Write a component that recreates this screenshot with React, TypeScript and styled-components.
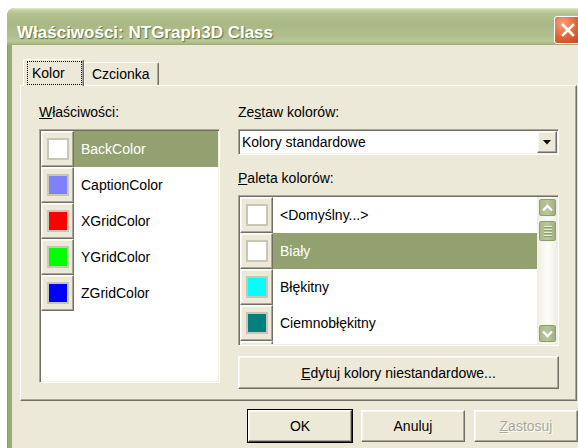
import React from "react";
import styled, { createGlobalStyle, css } from "styled-components";

const GlobalStyle = createGlobalStyle`
  html, body {
    margin: 0;
    padding: 0;
    background: #fff;
    overflow: hidden;
  }
  body {
    font-family: "Liberation Sans", Arial, sans-serif;
    font-size: 14px;
    color: #000;
  }
  * {
    box-sizing: border-box;
  }
`;

const raised = css`
  border: 1px solid;
  border-color: #fff #716f64 #716f64 #fff;
  box-shadow: inset -1px -1px 0 #aca899, inset 1px 1px 0 #f7f6ef;
`;

const sunken = css`
  border: 1px solid;
  border-color: #aca899 #fff #fff #aca899;
  box-shadow: inset 1px 1px 0 #716f64, inset -1px -1px 0 #f1efe2;
  padding: 1px;
  background: #fff;
`;

// the dialog runs past the right edge of the screen, so clip it there
const Screen = styled.div`
  width: 100vw;
  height: 100vh;
  overflow: hidden;
  padding: 8px 0 0 7px;
`;

const Window = styled.div`
  width: 588px;
  min-width: 588px;
  height: 460px;
  padding: 0 4px;
  display: flex;
  flex-direction: column;
  border-radius: 8px 8px 0 0;
  border-left: 1px solid #8a9d64;
  background: linear-gradient(to right, #98ab71, #aabb8a);
`;

const TitleBar = styled.div`
  height: 37px;
  margin: 0 -4px 0 -5px;
  padding: 0 13px 0 10px;
  display: flex;
  align-items: center;
  justify-content: space-between;
  border-radius: 8px 8px 0 0;
  background: linear-gradient(
    #e3e9cc 0,
    #c6d2a3 2px,
    #b2c18f 6px,
    #a9b985 45%,
    #afbe8b 75%,
    #bac799 90%,
    #9aac75 100%
  );
`;

const Title = styled.div`
  margin-top: 12px;
  font-size: 17px;
  line-height: 20px;
  font-weight: bold;
  color: #fff;
  text-shadow: 1px 1px 1px #5f7040;
  white-space: nowrap;
`;

const CloseButton = styled.div`
  width: 28px;
  height: 28px;
  flex-shrink: 0;
  margin-top: 6px;
  display: flex;
  align-items: center;
  justify-content: center;
  border: 1px solid #fff;
  border-radius: 3px;
  background: radial-gradient(circle at 30% 25%, #f3a27c, #de6032 55%, #c4471d);
`;

const Body = styled.div`
  flex: 1;
  padding-top: 14px;
  background: #ece9d8;
`;

const Tabs = styled.div`
  display: flex;
  align-items: flex-end;
  height: 26px;
  padding-left: 11px;
`;

const Tab = styled.div<{ $active?: boolean }>`
  height: ${(p) => (p.$active ? 27 : 23)}px;
  display: flex;
  align-items: center;
  padding: ${(p) => (p.$active ? "0 1px 1px 3px" : "0 8px 0 7px")};
  border: 1px solid;
  border-bottom: none;
  border-color: #fff #716f64 transparent #fff;
  border-radius: 2px 2px 0 0;
  box-shadow: inset -1px 0 0 #aca899;
  background: #ece9d8;
  ${(p) =>
    p.$active &&
    css`
      position: relative;
      z-index: 1;
      margin-bottom: -1px;
    `}
`;

const FocusRect = styled.div`
  width: 55px;
  height: 24px;
  padding-left: 4px;
  display: flex;
  align-items: center;
  border: 1px dotted #000;
`;

const Panel = styled.div`
  width: 557px;
  height: 316px;
  margin-left: 8px;
  padding: 18px 0 0 18px;
  display: flex;
  gap: 18px;
  border: 1px solid;
  border-color: #fff #716f64 #716f64 #fff;
  box-shadow: inset -1px -1px 0 #aca899;
`;

const Column = styled.div<{ $width: number }>`
  width: ${(p) => p.$width}px;
  flex-shrink: 0;
  display: flex;
  flex-direction: column;
`;

const Label = styled.div<{ $gap?: number }>`
  line-height: 16px;
  margin-top: ${(p) => p.$gap ?? 0}px;
  margin-bottom: 9px;
`;

const Key = styled.span`
  text-decoration: underline;
`;

const ListBox = styled.div<{ $height: number }>`
  ${sunken};
  height: ${(p) => p.$height}px;
  display: flex;
  overflow: hidden;
`;

const Rows = styled.div`
  flex: 1;
  display: flex;
  flex-direction: column;
  overflow: hidden;
`;

const Row = styled.div`
  height: 36px;
  flex-shrink: 0;
  display: flex;
`;

const SwatchButton = styled.div`
  ${raised};
  width: 33px;
  display: flex;
  align-items: center;
  justify-content: center;
  background: #ece9d8;
`;

const Swatch = styled.div<{ $color: string }>`
  width: 22px;
  height: 22px;
  border: 2px solid #c9c6b4;
  background: ${(p) => p.$color};
`;

const RowLabel = styled.div<{ $selected?: boolean }>`
  flex: 1;
  display: flex;
  align-items: center;
  padding-left: 7px;
  background: ${(p) => (p.$selected ? "#93a070" : "transparent")};
  color: ${(p) => (p.$selected ? "#fff" : "#000")};
`;

const Combo = styled.div`
  ${sunken};
  height: 26px;
  display: flex;
  align-items: center;
  padding-left: 3px;
`;

const ComboText = styled.div`
  flex: 1;
`;

const DropButton = styled.div`
  ${raised};
  width: 20px;
  height: 22px;
  display: flex;
  align-items: center;
  justify-content: center;
  background: #ece9d8;
`;

const ScrollBar = styled.div`
  width: 20px;
  padding: 1px 0 1px 1px;
  display: flex;
  flex-direction: column;
  background: linear-gradient(to right, #efede2, #fdfdf9 55%, #efede4);
`;

const greenButton = css`
  border: 1px solid #f2f4ea;
  border-radius: 3px;
  background: linear-gradient(to right, #a6b787, #b8c79c 50%, #9cae7a);
  box-shadow: inset 0 0 0 1px #8d9f6c;
`;

const ScrollArrow = styled.div`
  ${greenButton};
  height: 19px;
  display: flex;
  align-items: center;
  justify-content: center;
`;

const Thumb = styled.div`
  ${greenButton};
  height: 22px;
  margin-top: 3px;
  display: flex;
  flex-direction: column;
  align-items: center;
  justify-content: center;
  gap: 2px;
`;

const Grip = styled.div`
  width: 8px;
  height: 1px;
  background: #e7ecd9;
  box-shadow: 0 1px 0 #8a9c69;
`;

const Spacer = styled.div`
  flex: 1;
`;

const PushButton = styled.div<{ $default?: boolean; $disabled?: boolean }>`
  ${raised};
  display: flex;
  align-items: center;
  justify-content: center;
  background: #ece9d8;
  color: ${(p) => (p.$disabled ? "#aca899" : "#000")};
  ${(p) =>
    p.$disabled &&
    css`
      text-shadow: 1px 1px 0 #fff;
    `}
  ${(p) =>
    p.$default &&
    css`
      outline: 1px solid #000;
      outline-offset: 0;
      border-color: #fff #404040 #404040 #fff;
    `}
`;

const EditButton = styled(PushButton)`
  height: 33px;
  margin-top: 10px;
`;

const ButtonRow = styled.div`
  display: flex;
  gap: 9px;
  margin-top: 9px;
  padding-left: 236px;
`;

const DialogButton = styled(PushButton)`
  width: 104px;
  height: 32px;
  flex-shrink: 0;
`;

const properties = [
  { name: "BackColor", color: "#ffffff", selected: true },
  { name: "CaptionColor", color: "#8080ff" },
  { name: "XGridColor", color: "#ff0000" },
  { name: "YGridColor", color: "#00ff00" },
  { name: "ZGridColor", color: "#0000ff" },
];

const palette = [
  { name: "<Domyślny...>", color: "#ffffff" },
  { name: "Biały", color: "#ffffff", selected: true },
  { name: "Błękitny", color: "#00ffff" },
  { name: "Ciemnobłękitny", color: "#008080" },
  { name: "Czarny", color: "#000000" },
];

const Chevron = ({ up }: { up?: boolean }) => (
  <svg width="11" height="8" viewBox="0 0 11 8">
    <polyline
      points={up ? "1,6.5 5.5,2 10,6.5" : "1,1.5 5.5,6 10,1.5"}
      fill="none"
      stroke="#fff"
      strokeWidth="2.4"
    />
  </svg>
);

function ColorRow({ name, color, selected }: { name: string; color: string; selected?: boolean }) {
  return (
    <Row>
      <SwatchButton>
        <Swatch $color={color} />
      </SwatchButton>
      <RowLabel $selected={selected}>{name}</RowLabel>
    </Row>
  );
}

export default function App() {
  return (
    <Screen>
      <GlobalStyle />
      <Window>
        <TitleBar>
          <Title>Właściwości: NTGraph3D Class</Title>
          <CloseButton>
            <svg width="14" height="14" viewBox="0 0 14 14">
              <path d="M2 2 L12 12 M12 2 L2 12" stroke="#fff" strokeWidth="2.6" strokeLinecap="square" />
            </svg>
          </CloseButton>
        </TitleBar>
        <Body>
          <Tabs>
            <Tab $active>
              <FocusRect>Kolor</FocusRect>
            </Tab>
            <Tab>Czcionka</Tab>
          </Tabs>
          <Panel>
            <Column $width={181}>
              <Label>
                <Key>W</Key>łaściwości:
              </Label>
              <ListBox $height={254}>
                <Rows>
                  {properties.map((p) => (
                    <ColorRow key={p.name} {...p} />
                  ))}
                </Rows>
              </ListBox>
            </Column>
            <Column $width={321}>
              <Label>
                Ze<Key>s</Key>taw kolorów:
              </Label>
              <Combo>
                <ComboText>Kolory standardowe</ComboText>
                <DropButton>
                  <svg width="8" height="5" viewBox="0 0 8 5">
                    <polygon points="0,0 8,0 4,4.5" fill="#000" />
                  </svg>
                </DropButton>
              </Combo>
              <Label $gap={15}>
                <Key>P</Key>aleta kolorów:
              </Label>
              <ListBox $height={151}>
                <Rows>
                  {palette.map((p) => (
                    <ColorRow key={p.name} {...p} />
                  ))}
                </Rows>
                <ScrollBar>
                  <ScrollArrow>
                    <Chevron up />
                  </ScrollArrow>
                  <Thumb>
                    <Grip />
                    <Grip />
                    <Grip />
                    <Grip />
                  </Thumb>
                  <Spacer />
                  <ScrollArrow>
                    <Chevron />
                  </ScrollArrow>
                </ScrollBar>
              </ListBox>
              <EditButton>
                <span>
                  <Key>E</Key>dytuj kolory niestandardowe...
                </span>
              </EditButton>
            </Column>
          </Panel>
          <ButtonRow>
            <DialogButton $default>OK</DialogButton>
            <DialogButton>Anuluj</DialogButton>
            <DialogButton $disabled>
              <span>
                <Key>Z</Key>astosuj
              </span>
            </DialogButton>
          </ButtonRow>
        </Body>
      </Window>
    </Screen>
  );
}
